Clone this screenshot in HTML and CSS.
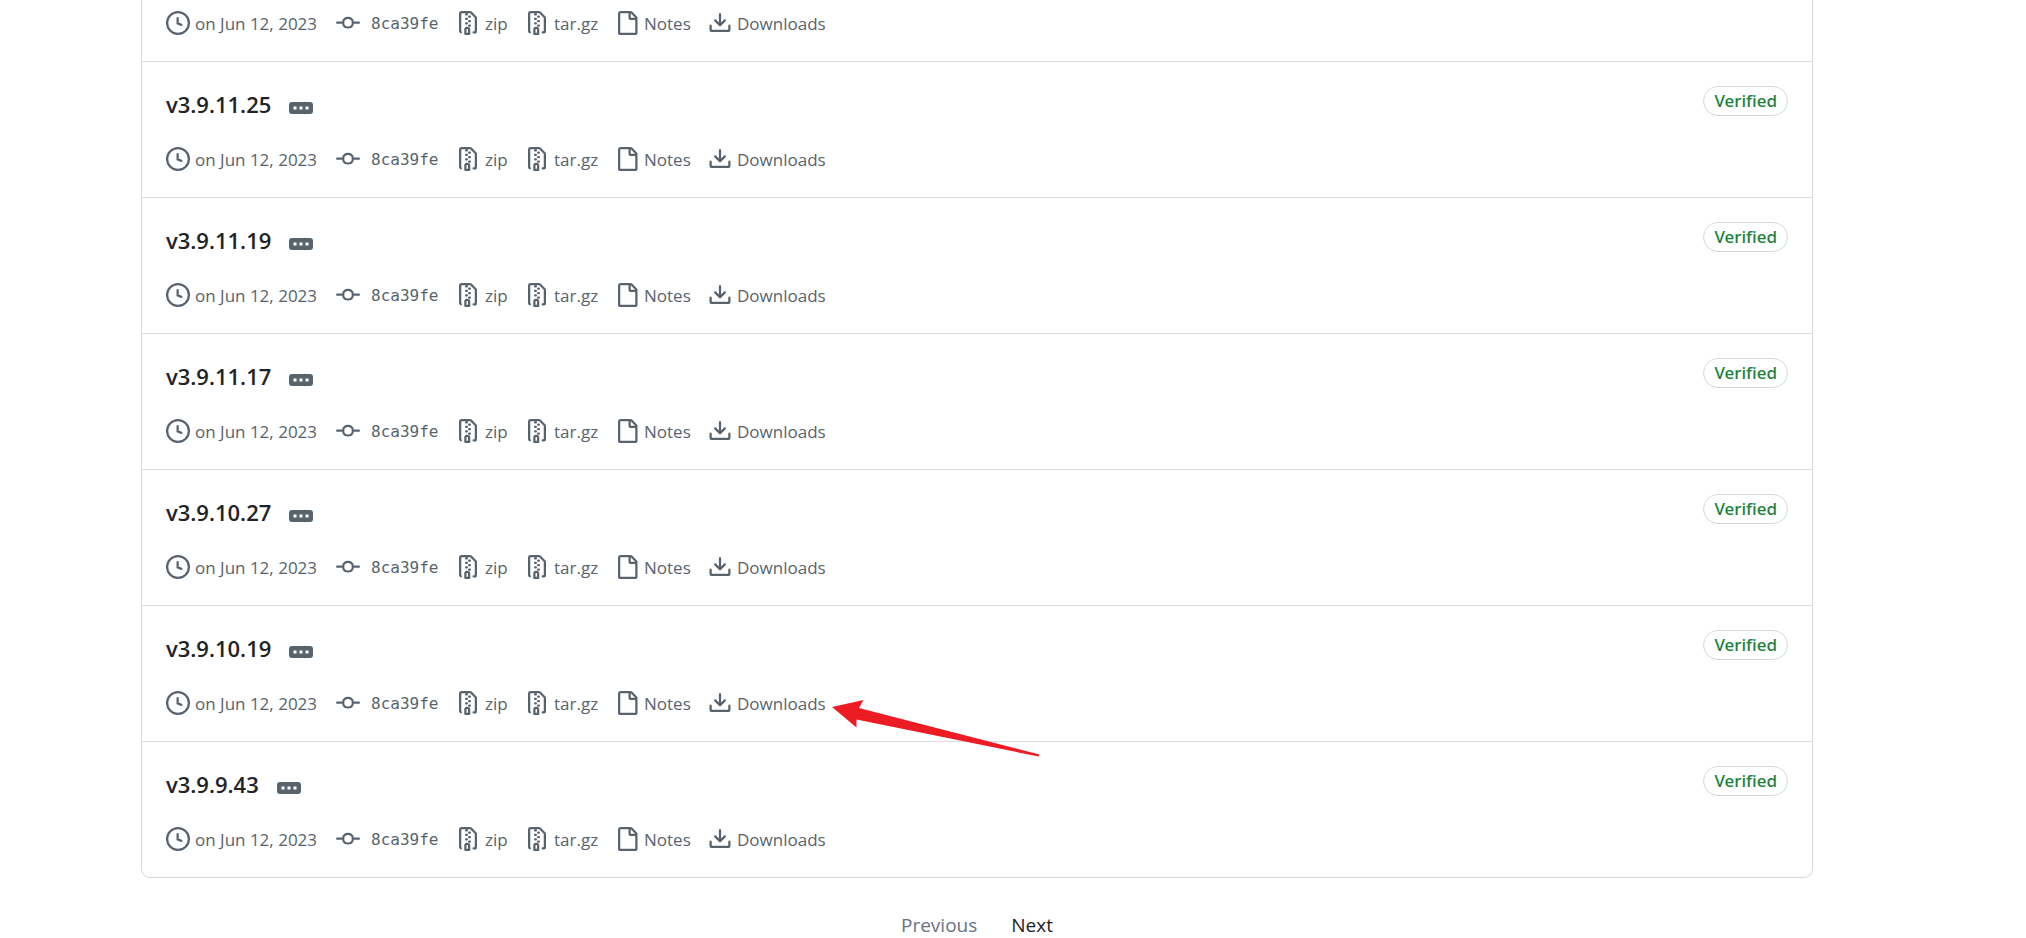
FILE: index.html
```html
<!DOCTYPE html>
<html lang="en">
<head>
<meta charset="utf-8">
<title>Tags</title>
<link rel="stylesheet" href="styles.css">
</head>
<body>
<svg class="sprite" aria-hidden="true">
  <symbol id="clock" viewBox="0 0 16 16"><path d="M8 0a8 8 0 1 1 0 16A8 8 0 0 1 8 0ZM1.5 8a6.5 6.5 0 1 0 13 0 6.5 6.5 0 0 0-13 0Zm7-3.25v2.992l2.028.812a.75.75 0 0 1-.557 1.392l-2.5-1A.751.751 0 0 1 7 8.25v-3.5a.75.75 0 0 1 1.5 0Z"/></symbol>
  <symbol id="commit" viewBox="0 0 16 16"><path d="M11.93 8.5a4.002 4.002 0 0 1-7.86 0H.75a.75.75 0 0 1 0-1.5h3.32a4.002 4.002 0 0 1 7.86 0h3.32a.75.75 0 0 1 0 1.5Zm-1.43-.75a2.5 2.5 0 1 0-5 0 2.5 2.5 0 0 0 5 0Z"/></symbol>
  <symbol id="archive" viewBox="0 0 16 16"><path d="M3.5 1.75v11.5c0 .09.048.173.126.217a.75.75 0 0 1-.752 1.298A1.748 1.748 0 0 1 2 13.25V1.75C2 .784 2.784 0 3.75 0h5.586c.464 0 .909.185 1.237.513l2.914 2.914c.329.328.513.773.513 1.237v8.586A1.75 1.75 0 0 1 12.25 15h-.5a.75.75 0 0 1 0-1.5h.5a.25.25 0 0 0 .25-.25V4.664a.25.25 0 0 0-.073-.177L9.513 1.573a.25.25 0 0 0-.177-.073H7.25a.75.75 0 0 1 0 1.5h-.5a.75.75 0 0 1 0-1.5h-3a.25.25 0 0 0-.25.25Zm3.75 8.75h.5c.966 0 1.75.784 1.75 1.75v3a.75.75 0 0 1-.75.75h-2.5a.75.75 0 0 1-.75-.75v-3c0-.966.784-1.75 1.75-1.75ZM6 5.25a.75.75 0 0 1 .75-.75h.5a.75.75 0 0 1 0 1.5h-.5A.75.75 0 0 1 6 5.25Zm.75 2.25h.5a.75.75 0 0 1 0 1.5h-.5a.75.75 0 0 1 0-1.5ZM8 6.75A.75.75 0 0 1 8.75 6h.5a.75.75 0 0 1 0 1.5h-.5A.75.75 0 0 1 8 6.75ZM8.75 3h.5a.75.75 0 0 1 0 1.5h-.5a.75.75 0 0 1 0-1.5ZM8 9.75A.75.75 0 0 1 8.75 9h.5a.75.75 0 0 1 0 1.5h-.5A.75.75 0 0 1 8 9.75Zm-1 2.5v2.25h1v-2.25a.25.25 0 0 0-.25-.25h-.5a.25.25 0 0 0-.25.25Z"/></symbol>
  <symbol id="file" viewBox="0 0 16 16"><path d="M2 1.75C2 .784 2.784 0 3.75 0h6.586c.464 0 .909.184 1.237.513l2.914 2.914c.329.328.513.773.513 1.237v9.586A1.75 1.75 0 0 1 13.25 16h-9.5A1.75 1.75 0 0 1 2 14.25Zm1.75-.25a.25.25 0 0 0-.25.25v12.5c0 .138.112.25.25.25h9.5a.25.25 0 0 0 .25-.25V6h-2.75A1.75 1.75 0 0 1 9 4.25V1.5Zm6.75.062V4.25c0 .138.112.25.25.25h2.688l-.011-.013-2.914-2.914-.013-.011Z"/></symbol>
  <symbol id="download" viewBox="0 0 16 16"><path d="M2.75 14A1.75 1.75 0 0 1 1 12.25v-2.5a.75.75 0 0 1 1.5 0v2.5c0 .138.112.25.25.25h10.5a.25.25 0 0 0 .25-.25v-2.5a.75.75 0 0 1 1.5 0v2.5A1.75 1.75 0 0 1 13.25 14Z"/><path d="M7.25 7.689V2a.75.75 0 0 1 1.5 0v5.689l1.97-1.969a.749.749 0 1 1 1.06 1.06l-3.25 3.25a.749.749 0 0 1-1.06 0L4.22 6.78a.749.749 0 1 1 1.06-1.06l1.97 1.969Z"/></symbol>
  <symbol id="dots" viewBox="0 0 24 12"><path d="M4.500 4.500h3v3h-3zM10.500 4.500h3v3h-3zM16.500 4.500h3v3h-3z"/></symbol>
</svg>
<main class="page">
  <ul class="tags">
    <li class="tag tag-partial">
      <ul class="meta">
        <li class="item"><svg class="icon"><use href="#clock"/></svg><span>on Jun 12, 2023</span></li>
        <li><a class="item item-commit" href="#"><svg class="icon"><use href="#commit"/></svg><code class="sha">8ca39fe</code></a></li>
        <li><a class="item" href="#"><svg class="icon"><use href="#archive"/></svg><span>zip</span></a></li>
        <li><a class="item" href="#"><svg class="icon"><use href="#archive"/></svg><span>tar.gz</span></a></li>
        <li><a class="item" href="#"><svg class="icon"><use href="#file"/></svg><span>Notes</span></a></li>
        <li><a class="item" href="#"><svg class="icon"><use href="#download"/></svg><span>Downloads</span></a></li>
      </ul>
    </li>
    <li class="tag">
      <div class="head">
        <h2 class="name"><a href="#">v3.9.11.25</a></h2>
        <button class="more" type="button" aria-label="Toggle commit message"><svg class="dots"><use href="#dots"/></svg></button>
        <button class="verified" type="button">Verified</button>
      </div>
      <ul class="meta">
        <li class="item"><svg class="icon"><use href="#clock"/></svg><span>on Jun 12, 2023</span></li>
        <li><a class="item item-commit" href="#"><svg class="icon"><use href="#commit"/></svg><code class="sha">8ca39fe</code></a></li>
        <li><a class="item" href="#"><svg class="icon"><use href="#archive"/></svg><span>zip</span></a></li>
        <li><a class="item" href="#"><svg class="icon"><use href="#archive"/></svg><span>tar.gz</span></a></li>
        <li><a class="item" href="#"><svg class="icon"><use href="#file"/></svg><span>Notes</span></a></li>
        <li><a class="item" href="#"><svg class="icon"><use href="#download"/></svg><span>Downloads</span></a></li>
      </ul>
    </li>
    <li class="tag">
      <div class="head">
        <h2 class="name"><a href="#">v3.9.11.19</a></h2>
        <button class="more" type="button" aria-label="Toggle commit message"><svg class="dots"><use href="#dots"/></svg></button>
        <button class="verified" type="button">Verified</button>
      </div>
      <ul class="meta">
        <li class="item"><svg class="icon"><use href="#clock"/></svg><span>on Jun 12, 2023</span></li>
        <li><a class="item item-commit" href="#"><svg class="icon"><use href="#commit"/></svg><code class="sha">8ca39fe</code></a></li>
        <li><a class="item" href="#"><svg class="icon"><use href="#archive"/></svg><span>zip</span></a></li>
        <li><a class="item" href="#"><svg class="icon"><use href="#archive"/></svg><span>tar.gz</span></a></li>
        <li><a class="item" href="#"><svg class="icon"><use href="#file"/></svg><span>Notes</span></a></li>
        <li><a class="item" href="#"><svg class="icon"><use href="#download"/></svg><span>Downloads</span></a></li>
      </ul>
    </li>
    <li class="tag">
      <div class="head">
        <h2 class="name"><a href="#">v3.9.11.17</a></h2>
        <button class="more" type="button" aria-label="Toggle commit message"><svg class="dots"><use href="#dots"/></svg></button>
        <button class="verified" type="button">Verified</button>
      </div>
      <ul class="meta">
        <li class="item"><svg class="icon"><use href="#clock"/></svg><span>on Jun 12, 2023</span></li>
        <li><a class="item item-commit" href="#"><svg class="icon"><use href="#commit"/></svg><code class="sha">8ca39fe</code></a></li>
        <li><a class="item" href="#"><svg class="icon"><use href="#archive"/></svg><span>zip</span></a></li>
        <li><a class="item" href="#"><svg class="icon"><use href="#archive"/></svg><span>tar.gz</span></a></li>
        <li><a class="item" href="#"><svg class="icon"><use href="#file"/></svg><span>Notes</span></a></li>
        <li><a class="item" href="#"><svg class="icon"><use href="#download"/></svg><span>Downloads</span></a></li>
      </ul>
    </li>
    <li class="tag">
      <div class="head">
        <h2 class="name"><a href="#">v3.9.10.27</a></h2>
        <button class="more" type="button" aria-label="Toggle commit message"><svg class="dots"><use href="#dots"/></svg></button>
        <button class="verified" type="button">Verified</button>
      </div>
      <ul class="meta">
        <li class="item"><svg class="icon"><use href="#clock"/></svg><span>on Jun 12, 2023</span></li>
        <li><a class="item item-commit" href="#"><svg class="icon"><use href="#commit"/></svg><code class="sha">8ca39fe</code></a></li>
        <li><a class="item" href="#"><svg class="icon"><use href="#archive"/></svg><span>zip</span></a></li>
        <li><a class="item" href="#"><svg class="icon"><use href="#archive"/></svg><span>tar.gz</span></a></li>
        <li><a class="item" href="#"><svg class="icon"><use href="#file"/></svg><span>Notes</span></a></li>
        <li><a class="item" href="#"><svg class="icon"><use href="#download"/></svg><span>Downloads</span></a></li>
      </ul>
    </li>
    <li class="tag">
      <div class="head">
        <h2 class="name"><a href="#">v3.9.10.19</a></h2>
        <button class="more" type="button" aria-label="Toggle commit message"><svg class="dots"><use href="#dots"/></svg></button>
        <button class="verified" type="button">Verified</button>
      </div>
      <ul class="meta">
        <li class="item"><svg class="icon"><use href="#clock"/></svg><span>on Jun 12, 2023</span></li>
        <li><a class="item item-commit" href="#"><svg class="icon"><use href="#commit"/></svg><code class="sha">8ca39fe</code></a></li>
        <li><a class="item" href="#"><svg class="icon"><use href="#archive"/></svg><span>zip</span></a></li>
        <li><a class="item" href="#"><svg class="icon"><use href="#archive"/></svg><span>tar.gz</span></a></li>
        <li><a class="item" href="#"><svg class="icon"><use href="#file"/></svg><span>Notes</span></a></li>
        <li class="pointed"><a class="item" href="#"><svg class="icon"><use href="#download"/></svg><span>Downloads</span></a>
          <svg class="arrow" viewBox="0 0 208 58" aria-hidden="true"><path d="M0 8 31.500 1 27 9 207.500 55.500 206.500 57.500 24.500 20.500 24.500 28.500Z"/></svg></li>
      </ul>
    </li>
    <li class="tag">
      <div class="head">
        <h2 class="name"><a href="#">v3.9.9.43</a></h2>
        <button class="more" type="button" aria-label="Toggle commit message"><svg class="dots"><use href="#dots"/></svg></button>
        <button class="verified" type="button">Verified</button>
      </div>
      <ul class="meta">
        <li class="item"><svg class="icon"><use href="#clock"/></svg><span>on Jun 12, 2023</span></li>
        <li><a class="item item-commit" href="#"><svg class="icon"><use href="#commit"/></svg><code class="sha">8ca39fe</code></a></li>
        <li><a class="item" href="#"><svg class="icon"><use href="#archive"/></svg><span>zip</span></a></li>
        <li><a class="item" href="#"><svg class="icon"><use href="#archive"/></svg><span>tar.gz</span></a></li>
        <li><a class="item" href="#"><svg class="icon"><use href="#file"/></svg><span>Notes</span></a></li>
        <li><a class="item" href="#"><svg class="icon"><use href="#download"/></svg><span>Downloads</span></a></li>
      </ul>
    </li>
  </ul>
  <nav class="pages" aria-label="Pagination">
    <a class="previous" href="#">Previous</a>
    <a class="next" href="#">Next</a>
  </nav>
</main>
</body>
</html>
```
FILE: styles.css
```css
* {
  box-sizing: border-box;
}

body {
  margin: 0;
  background: #fff;
  color: #1f2328;
  font-family: "Open Sans", "Noto Sans", sans-serif;
}

a {
  color: inherit;
  text-decoration: none;
}

ul {
  list-style: none;
  margin: 0;
  padding: 0;
}

button {
  font-family: inherit;
  cursor: pointer;
}

.sprite {
  display: none;
}

.page {
  margin: 0 213px 0 141px;
}

.tags {
  border: 1px solid #d1d9e0;
  border-top: 0;
  border-radius: 0 0 9px 9px;
}

.tag {
  padding: 24px;
}

.tag + .tag {
  border-top: 1px solid #d9dee3;
}

.tag-partial {
  padding-top: 9px;
}

.head {
  display: flex;
  align-items: flex-start;
  margin-bottom: 23px;
}

.name {
  margin: 0;
  font-size: 22px;
  font-weight: 600;
  line-height: 36px;
}

.more {
  display: flex;
  margin: 16px 0 0 18px;
  padding: 0;
  border: 0;
  border-radius: 3px;
  background: #59636e;
  color: #fff;
}

.dots {
  width: 24px;
  height: 12px;
  fill: currentColor;
}

.verified {
  margin-left: auto;
  padding: 0 10px;
  border: 1px solid #d1d9e0;
  border-radius: 15px;
  background: transparent;
  color: #1a7f37;
  font-family: "Noto Sans", sans-serif;
  font-size: 17px;
  font-weight: 500;
  line-height: 28px;
}

.meta {
  display: grid;
  grid-template-columns: 170px 120px 69px 90px 93px auto;
  justify-content: start;
  color: #59636e;
  font-size: 17px;
  line-height: 26px;
}

.item {
  display: flex;
  align-items: center;
  gap: 5px;
}

.item span,
.item code {
  padding-top: 2px;
}

.item-commit {
  gap: 11px;
}

.icon {
  flex: none;
  width: 24px;
  height: 24px;
  fill: currentColor;
}

.sha {
  font-family: "DejaVu Sans Mono", monospace;
  font-size: 16px;
}

.pointed {
  position: relative;
}

.arrow {
  position: absolute;
  left: 124px;
  top: 10px;
  width: 208px;
  height: 58px;
  fill: #ed1c24;
}

.pages {
  display: flex;
  justify-content: center;
  gap: 34px;
  margin-top: 35px;
  font-size: 19px;
  line-height: 24px;
}

.previous {
  color: #6b7280;
}
```
